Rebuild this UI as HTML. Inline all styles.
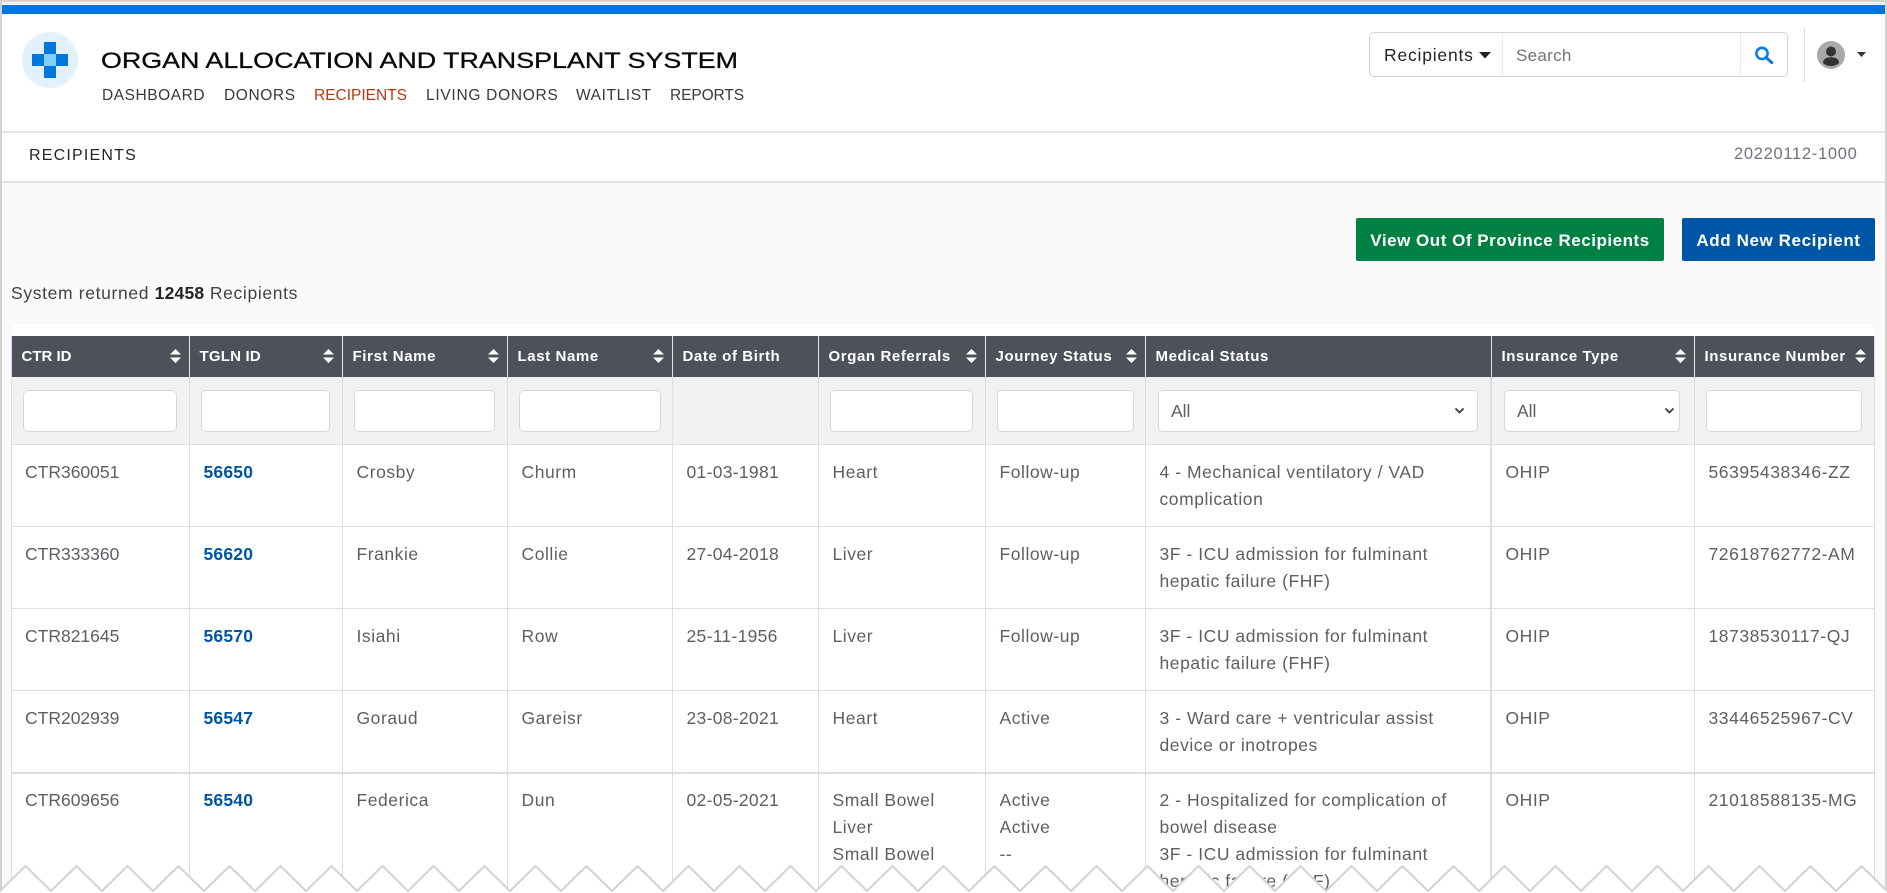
<!DOCTYPE html>
<html lang="en">
<head>
<meta charset="utf-8">
<title>Recipients</title>
<style>
*{box-sizing:border-box}
html,body{margin:0;padding:0;width:1887px;height:893px;overflow:hidden;background:#fff;font-family:"Liberation Sans",sans-serif;color:#5c6066}
.a{position:absolute;white-space:nowrap}
#page{position:absolute;left:0;top:0;width:1887px;height:893px;overflow:hidden;background:#fff}
.nav{top:86px;font-size:15.5px;line-height:20px;color:#343a40}
table{position:absolute;left:12px;top:336px;width:1862px;border-collapse:separate;border-spacing:0;table-layout:fixed;font-size:17.5px;letter-spacing:.55px;background:#fff}
th{background:#4d5159;color:#fff;font-size:15px;letter-spacing:.6px;font-weight:700;text-align:left;height:41px;padding:0 0 0 9.5px;border-right:1px solid #e4e5e8;position:relative;white-space:nowrap}
th:last-child{border-right:0}
th svg{position:absolute;top:13px;right:8px;width:11px;height:14px}
.f td{background:#f1f1f1;height:68px;padding:0;border-right:1px solid #dcdee4;border-bottom:1px solid #dcdee4;position:relative}
.f input,.f select{position:absolute;top:13px;height:42px;border:1px solid #d5d8de;border-radius:5px;background:#fff;font:17.5px "Liberation Sans",sans-serif;color:#5c6066;padding:0 12px;appearance:none;-webkit-appearance:none;outline:0}
.f svg{position:absolute;top:30px;width:11px;height:8px;pointer-events:none}
.r td{height:82px;vertical-align:top;padding:14px 8px 0 13.5px;line-height:27px;border-right:1px solid #dcdee4;border-bottom:1px solid #dcdee4;white-space:nowrap}
.r td:first-child{letter-spacing:0;padding-left:13px}
.r td:nth-child(5){letter-spacing:.3px}
.r td:nth-child(8),.f td:nth-child(8){border-right-width:2px}
td:last-child{border-right:0!important}
.r5 td{border-top:1px solid #dcdee4;border-bottom:0;height:119px;padding-top:13px}
.r5 td div{height:106px;overflow:hidden}
.r td a{color:#0056a6;font-weight:700;text-decoration:none;letter-spacing:.2px}
</style>
</head>
<body>
<div id="page">
  <!-- frame -->
  <div class="a" style="left:0;top:0;width:1887px;height:2px;background:#d2d2d2"></div>
  <div class="a" style="left:0;top:3px;width:1887px;height:1px;background:#e4e4e4"></div>
  <div class="a" style="left:2px;top:5px;width:1883px;height:9px;background:#0076dc"></div>

  <!-- page background -->
  <div class="a" style="left:2px;top:131px;width:1883px;height:2px;background:#e3e3e3"></div>
  <div class="a" style="left:2px;top:181px;width:1883px;height:2px;background:#e3e3e3"></div>
  <div class="a" style="left:2px;top:183px;width:1883px;height:710px;background:#fafafa"></div>

  <!-- logo -->
  <svg class="a" style="left:22px;top:32px" width="56" height="56" viewBox="0 0 56 56">
    <circle cx="28" cy="28" r="28" fill="#e3f1fd"/>
    <rect x="22" y="10" width="12" height="36" fill="#0076dc"/>
    <rect x="10" y="22" width="36" height="12" fill="#0076dc"/>
    <rect x="22" y="22" width="12" height="12" fill="#7fd0fb"/>
  </svg>

  <!-- title -->
  <svg class="a" style="left:100px;top:44px" width="650" height="32">
    <text x="1" y="24" font-family="Liberation Sans, sans-serif" font-size="22.5" fill="#0a0a0a" stroke="#0a0a0a" stroke-width=".3" textLength="637" lengthAdjust="spacingAndGlyphs">ORGAN ALLOCATION AND TRANSPLANT SYSTEM</text>
  </svg>

  <!-- nav -->
  <span class="a nav" style="left:102px;letter-spacing:.55px">DASHBOARD</span>
  <span class="a nav" style="left:224px;letter-spacing:.6px">DONORS</span>
  <span class="a nav" style="left:314px;color:#b23a10">RECIPIENTS</span>
  <span class="a nav" style="left:426px;letter-spacing:.72px">LIVING DONORS</span>
  <span class="a nav" style="left:576px;letter-spacing:.6px">WAITLIST</span>
  <span class="a nav" style="left:670px;letter-spacing:-.1px">REPORTS</span>

  <!-- search -->
  <div class="a" style="left:1369px;top:32px;width:419px;height:45px;border:1px solid #ced2da;border-radius:5px;background:#fff"></div>
  <div class="a" style="left:1502px;top:33px;width:1px;height:43px;background:#e9ebee"></div>
  <div class="a" style="left:1740px;top:33px;width:1px;height:43px;background:#e9ebee"></div>
  <span class="a" style="left:1384px;top:44px;font-size:17.5px;letter-spacing:.8px;line-height:22px;color:#212529">Recipients</span>
  <svg class="a" style="left:1479px;top:52px" width="12" height="7"><path d="M0 0h12L6 6.5z" fill="#212529"/></svg>
  <span class="a" style="left:1516px;top:45px;font-size:17px;letter-spacing:.3px;line-height:22px;color:#70767c">Search</span>
  <svg class="a" style="left:1754px;top:46px" width="20" height="18" viewBox="0 0 20 18">
    <circle cx="8" cy="7.4" r="5.6" fill="none" stroke="#0a7bf0" stroke-width="2.6"/>
    <path d="M12.2 11.6l5.6 5" stroke="#0a7bf0" stroke-width="3" stroke-linecap="round"/>
  </svg>
  <div class="a" style="left:1804px;top:28px;width:1px;height:54px;background:#dedede"></div>
  <svg class="a" style="left:1817px;top:41px" width="28" height="28" viewBox="0 0 28 28">
    <circle cx="14" cy="14" r="14" fill="#a9a9ac"/>
    <circle cx="14" cy="10.5" r="5" fill="#333"/>
    <path d="M6 22c0-4 3-5.800 8-5.800s8 1.800 8 5.800c-2 2-5 3-8 3s-6-1-8-3z" fill="#333"/>
  </svg>
  <svg class="a" style="left:1857px;top:52px" width="9" height="5"><path d="M0 0h9L4.500 5z" fill="#333"/></svg>

  <!-- sub header -->
  <span class="a" style="left:29px;top:146px;font-size:16px;letter-spacing:1.2px;line-height:20px;color:#212529">RECIPIENTS</span>
  <span class="a" style="left:1734px;top:144px;font-size:16.5px;letter-spacing:.7px;line-height:20px;color:#6c757d">20220112-1000</span>

  <!-- buttons -->
  <div class="a" style="left:1356px;top:218px;width:308px;height:43px;border-radius:2px;background:#008042;color:#fff;font-weight:700;font-size:17px;letter-spacing:.52px;line-height:45px;text-align:center">View Out Of Province Recipients</div>
  <div class="a" style="left:1682px;top:218px;width:193px;height:43px;border-radius:2px;background:#0056a6;color:#fff;font-weight:700;font-size:17px;letter-spacing:.6px;line-height:45px;text-align:center">Add New Recipient</div>

  <div class="a" style="left:11px;top:282px;font-size:17.5px;letter-spacing:.65px;line-height:22px;color:#3f444a">System returned <b style="color:#212529;letter-spacing:.2px">12458</b> Recipients</div>

  <!-- table card -->
  <div class="a" style="left:11px;top:324px;width:1864px;height:20px;background:#fff;border-radius:5px 5px 0 0;box-shadow:0 0 2px #eee"></div>
  <div class="a" style="left:11px;top:336px;width:1px;height:557px;background:#dcdee4"></div>
  <div class="a" style="left:1874px;top:336px;width:1px;height:557px;background:#dcdee4"></div>

  <table>
    <colgroup>
      <col style="width:178px"><col style="width:153px"><col style="width:165px"><col style="width:165px"><col style="width:146px"><col style="width:167px"><col style="width:160px"><col style="width:346px"><col style="width:203px"><col style="width:179px">
    </colgroup>
    <thead>
      <tr>
        <th style="letter-spacing:0">CTR ID<svg viewBox="0 0 11 14"><path d="M5.500 0L11 5.500H0zM5.500 14L0 8.500h11z" fill="#fff"/></svg></th>
        <th style="letter-spacing:.2px">TGLN ID<svg viewBox="0 0 11 14"><path d="M5.500 0L11 5.500H0zM5.500 14L0 8.500h11z" fill="#fff"/></svg></th>
        <th>First Name<svg viewBox="0 0 11 14"><path d="M5.500 0L11 5.500H0zM5.500 14L0 8.500h11z" fill="#fff"/></svg></th>
        <th>Last Name<svg viewBox="0 0 11 14"><path d="M5.500 0L11 5.500H0zM5.500 14L0 8.500h11z" fill="#fff"/></svg></th>
        <th>Date of Birth</th>
        <th>Organ Referrals<svg viewBox="0 0 11 14"><path d="M5.500 0L11 5.500H0zM5.500 14L0 8.500h11z" fill="#fff"/></svg></th>
        <th>Journey Status<svg viewBox="0 0 11 14"><path d="M5.500 0L11 5.500H0zM5.500 14L0 8.500h11z" fill="#fff"/></svg></th>
        <th>Medical Status</th>
        <th>Insurance Type<svg viewBox="0 0 11 14"><path d="M5.500 0L11 5.500H0zM5.500 14L0 8.500h11z" fill="#fff"/></svg></th>
        <th>Insurance Number<svg viewBox="0 0 11 14"><path d="M5.500 0L11 5.500H0zM5.500 14L0 8.500h11z" fill="#fff"/></svg></th>
      </tr>
    </thead>
    <tbody>
      <tr class="f">
        <td><input style="left:11px;width:154px"></td>
        <td><input style="left:11px;width:129px"></td>
        <td><input style="left:11px;width:141px"></td>
        <td><input style="left:11px;width:142px"></td>
        <td></td>
        <td><input style="left:11px;width:143px"></td>
        <td><input style="left:11px;width:137px"></td>
        <td><select style="left:12px;width:320px"><option>All</option></select><svg style="left:308px" viewBox="0 0 11 8"><path d="M1.500 1.500l4 4 4-4" fill="none" stroke="#343a40" stroke-width="1.800"/></svg></td>
        <td><select style="left:12px;width:176px"><option>All</option></select><svg style="left:172px" viewBox="0 0 11 8"><path d="M1.500 1.500l4 4 4-4" fill="none" stroke="#343a40" stroke-width="1.800"/></svg></td>
        <td><input style="left:11px;width:156px"></td>
      </tr>
      <tr class="r">
        <td>CTR360051</td><td><a>56650</a></td><td>Crosby</td><td>Churm</td><td>01-03-1981</td><td>Heart</td><td>Follow-up</td>
        <td>4 - Mechanical ventilatory / VAD<br>complication</td><td>OHIP</td><td>56395438346-ZZ</td>
      </tr>
      <tr class="r">
        <td>CTR333360</td><td><a>56620</a></td><td>Frankie</td><td>Collie</td><td>27-04-2018</td><td>Liver</td><td>Follow-up</td>
        <td>3F - ICU admission for fulminant<br>hepatic failure (FHF)</td><td>OHIP</td><td>72618762772-AM</td>
      </tr>
      <tr class="r">
        <td>CTR821645</td><td><a>56570</a></td><td>Isiahi</td><td>Row</td><td>25-11-1956</td><td>Liver</td><td>Follow-up</td>
        <td>3F - ICU admission for fulminant<br>hepatic failure (FHF)</td><td>OHIP</td><td>18738530117-QJ</td>
      </tr>
      <tr class="r">
        <td>CTR202939</td><td><a>56547</a></td><td>Goraud</td><td>Gareisr</td><td>23-08-2021</td><td>Heart</td><td>Active</td>
        <td>3 - Ward care + ventricular assist<br>device or inotropes</td><td>OHIP</td><td>33446525967-CV</td>
      </tr>
      <tr class="r r5">
        <td><div>CTR609656</div></td><td><div><a>56540</a></div></td><td><div>Federica</div></td><td><div>Dun</div></td><td><div>02-05-2021</div></td><td><div>Small Bowel<br>Liver<br>Small Bowel</div></td><td><div>Active<br>Active<br>--</div></td>
        <td><div>2 - Hospitalized for complication of<br>bowel disease<br>3F - ICU admission for fulminant<br>hepatic failure (FHF)</div></td><td><div>OHIP</div></td><td><div>21018588135-MG</div></td>
      </tr>
    </tbody>
  </table>

  <!-- side borders -->
  <div class="a" style="left:0;top:0;width:2px;height:893px;background:#d2d2d2"></div>
  <div class="a" style="right:0;top:0;width:2px;height:893px;background:#d2d2d2"></div>

  <!-- torn edge -->
  <svg class="a" style="left:0;top:860px" width="1887" height="33" viewBox="0 0 1887 33">
    <path fill="#fff" stroke="#d2d2d2" stroke-width="2" d="M-25.500 31L0 31 25.500 6 51 31 76.500 6 102 31 127.500 6 153 31 178.500 6 204 31 229.500 6 255 31 280.500 6 306 31 331.500 6 357 31 382.500 6 408 31 433.500 6 459 31 484.500 6 510 31 535.500 6 561 31 586.500 6 612 31 637.500 6 663 31 688.500 6 714 31 739.500 6 765 31 790.500 6 816 31 841.500 6 867 31 892.500 6 918 31 943.500 6 969 31 994.500 6 1020 31 1045.500 6 1071 31 1096.500 6 1122 31 1147.500 6 1173 31 1198.500 6 1224 31 1249.500 6 1275 31 1300.500 6 1326 31 1351.500 6 1377 31 1402.500 6 1428 31 1453.500 6 1479 31 1504.500 6 1530 31 1555.500 6 1581 31 1606.500 6 1632 31 1657.500 6 1683 31 1708.500 6 1734 31 1759.500 6 1785 31 1810.500 6 1836 31 1861.500 6 1887 31 1912 6 V40 H-25.500 Z"/>
  </svg>
</div>
</body>
</html>
